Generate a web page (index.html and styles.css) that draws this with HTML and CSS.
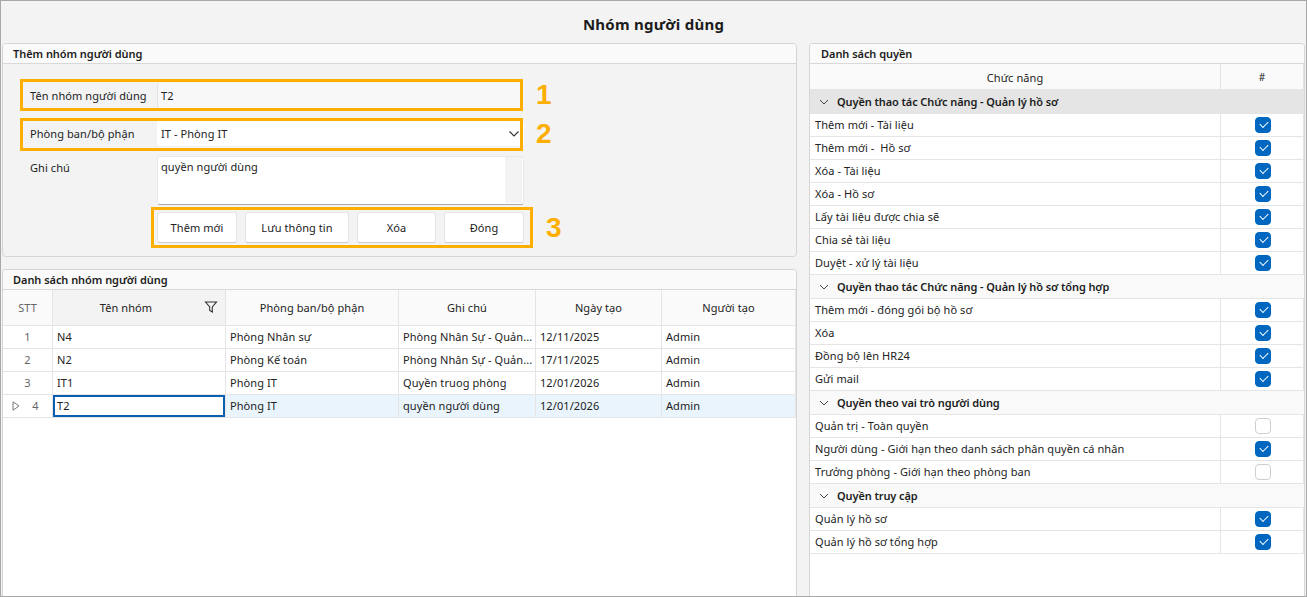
FILE: index.html
```html
<!DOCTYPE html>
<html lang="vi">
<head>
<meta charset="utf-8">
<title>Nhóm người dùng</title>
<link rel="stylesheet" href="styles.css">
</head>
<body>
<div class="app">
  <h1 class="title">Nhóm người dùng</h1>
  <div class="columns">
    <div class="left">
      <section class="panel form-panel">
        <h2 class="panel-head">Thêm nhóm người dùng</h2>
        <div class="form">
          <div class="row">
            <label class="lbl">Tên nhóm người dùng</label>
            <div class="field field-plain">T2</div>
          </div>
          <div class="row row2">
            <label class="lbl">Phòng ban/bộ phận</label>
            <div class="field field-select">IT - Phòng IT
              <svg class="chev" width="12" height="8" viewBox="0 0 12 8"><path d="M1.500 1.500 6 6l4.500-4.500" fill="none" stroke="#333" stroke-width="1.100"/></svg>
            </div>
          </div>
          <div class="row row3">
            <label class="lbl lbl-note">Ghi chú</label>
            <div class="field field-area"><span>quyền người dùng</span><i class="scroll"></i></div>
          </div>
          <div class="buttons">
            <button class="btn b1">Thêm mới</button>
            <button class="btn b2">Lưu thông tin</button>
            <button class="btn b3">Xóa</button>
            <button class="btn b1">Đóng</button>
          </div>
          <i class="mark m1"></i><b class="num n1">1</b>
          <i class="mark m2"></i><b class="num n2">2</b>
          <i class="mark m3"></i><b class="num n3">3</b>
        </div>
      </section>
      <section class="panel list-panel">
        <h2 class="panel-head">Danh sách nhóm người dùng</h2>
        <table class="grid groups">
          <colgroup><col class="c1"><col class="c2"><col class="c3"><col class="c4"><col class="c5"><col class="c6"></colgroup>
          <thead>
            <tr><th class="stt-h">STT</th><th class="filter-h">Tên nhóm<svg class="filter" width="14" height="14" viewBox="0 0 14 14"><path d="M1.500 2h11L8.300 7v5l-2.600-1.500V7z" fill="none" stroke="#333" stroke-width="1.100"/></svg></th><th>Phòng ban/bộ phận</th><th>Ghi chú</th><th>Ngày tạo</th><th>Người tạo</th></tr>
          </thead>
          <tbody>
            <tr><td class="stt">1</td><td>N4</td><td>Phòng Nhân sự</td><td>Phòng Nhân Sự - Quản...</td><td>12/11/2025</td><td>Admin</td></tr>
            <tr><td class="stt">2</td><td>N2</td><td>Phòng Kế toán</td><td>Phòng Nhân Sự - Quản...</td><td>17/11/2025</td><td>Admin</td></tr>
            <tr><td class="stt">3</td><td>IT1</td><td>Phòng IT</td><td>Quyền truog phòng</td><td>12/01/2026</td><td>Admin</td></tr>
            <tr class="sel"><td class="stt"><svg class="arrow" width="8" height="10" viewBox="0 0 8 10"><path d="M1 .8 7 5 1 9.200z" fill="none" stroke="#777"/></svg>4</td><td class="focus">T2</td><td>Phòng IT</td><td>quyền người dùng</td><td>12/01/2026</td><td>Admin</td></tr>
          </tbody>
        </table>
      </section>
    </div>
    <section class="panel right">
      <h2 class="panel-head">Danh sách quyền</h2>
      <table class="grid perms">
        <colgroup><col class="p1"><col class="p2"></colgroup>
        <thead><tr><th>Chức năng</th><th class="hash">#</th></tr></thead>
        <tbody>
          <tr class="grp first"><td colspan="2"><svg class="gchev" width="10" height="6" viewBox="0 0 10 6"><path d="M1 1l4 4 4-4" fill="none" stroke="#444"/></svg>Quyền thao tác Chức năng - Quản lý hồ sơ</td></tr>
          <tr><td>Thêm mới - Tài liệu</td><td class="ck"><i class="box on"></i></td></tr>
          <tr><td>Thêm mới -&nbsp; Hồ sơ</td><td class="ck"><i class="box on"></i></td></tr>
          <tr><td>Xóa - Tài liệu</td><td class="ck"><i class="box on"></i></td></tr>
          <tr><td>Xóa - Hồ sơ</td><td class="ck"><i class="box on"></i></td></tr>
          <tr><td>Lấy tài liệu được chia sẽ</td><td class="ck"><i class="box on"></i></td></tr>
          <tr><td>Chia sẻ tài liệu</td><td class="ck"><i class="box on"></i></td></tr>
          <tr><td>Duyệt - xử lý tài liệu</td><td class="ck"><i class="box on"></i></td></tr>
          <tr class="grp"><td colspan="2"><svg class="gchev" width="10" height="6" viewBox="0 0 10 6"><path d="M1 1l4 4 4-4" fill="none" stroke="#444"/></svg>Quyền thao tác Chức năng - Quản lý hồ sơ tổng hợp</td></tr>
          <tr><td>Thêm mới - đóng gói bộ hồ sơ</td><td class="ck"><i class="box on"></i></td></tr>
          <tr><td>Xóa</td><td class="ck"><i class="box on"></i></td></tr>
          <tr><td>Đồng bộ lên HR24</td><td class="ck"><i class="box on"></i></td></tr>
          <tr><td>Gửi mail</td><td class="ck"><i class="box on"></i></td></tr>
          <tr class="grp"><td colspan="2"><svg class="gchev" width="10" height="6" viewBox="0 0 10 6"><path d="M1 1l4 4 4-4" fill="none" stroke="#444"/></svg>Quyền theo vai trò người dùng</td></tr>
          <tr><td>Quản trị - Toàn quyền</td><td class="ck"><i class="box"></i></td></tr>
          <tr><td>Người dùng - Giới hạn theo danh sách phân quyền cá nhân</td><td class="ck"><i class="box on"></i></td></tr>
          <tr><td>Trưởng phòng - Giới hạn theo phòng ban</td><td class="ck"><i class="box"></i></td></tr>
          <tr class="grp"><td colspan="2"><svg class="gchev" width="10" height="6" viewBox="0 0 10 6"><path d="M1 1l4 4 4-4" fill="none" stroke="#444"/></svg>Quyền truy cập</td></tr>
          <tr><td>Quản lý hồ sơ</td><td class="ck"><i class="box on"></i></td></tr>
          <tr><td>Quản lý hồ sơ tổng hợp</td><td class="ck"><i class="box on"></i></td></tr>
        </tbody>
      </table>
    </section>
  </div>
</div>
</body>
</html>
```
FILE: styles.css
```css
* { box-sizing: border-box; }
html, body { margin: 0; padding: 0; height: 100%; overflow: hidden; }
body { font-family: "Noto Sans", "Open Sans", sans-serif; font-size: 11px; letter-spacing: .08px; color: #222; background: #f3f3f3; }
.app { width: 1307px; height: 597px; border: 1px solid #a8a8a8; display: flex; flex-direction: column; overflow: hidden; }
.title { margin: 0; height: 42px; padding-top: 12px; text-align: center; font-size: 15px; letter-spacing: .25px; line-height: 22px; font-weight: 700; color: #1c1c1c; }
.columns { flex: 1; display: flex; gap: 12px; padding-left: 1px; min-height: 0; }
.left { width: 795px; display: flex; flex-direction: column; gap: 12px; }
.panel { background: #f3f3f3; border: 1px solid #d5d5d5; border-radius: 4px 4px 0 0; overflow: hidden; }
.panel-head { margin: 0; height: 20px; background: #fafafa; border-bottom: 1px solid #d8d8d8; padding-left: 10px; font-size: 11px; letter-spacing: -.05px; line-height: 19px; font-weight: 600; color: #1c1c1c; }
.right .panel-head { padding-left: 11px; }
.form-panel { height: 214px; border-radius: 4px; }
.form { position: relative; height: 192px; padding: 19px 0 0 27px; }
.row { display: flex; height: 25px; }
.row2 { margin-top: 13px; }
.row3 { margin-top: 10px; height: 49px; }
.lbl { width: 127px; line-height: 25px; color: #222; }
.lbl-note { line-height: 23px; }
.field { width: 367px; padding-left: 4px; line-height: 25px; position: relative; border-radius: 3px; }
.field-plain { background: #f8f8f8; border-left: 1px solid #e2e2e2; padding-left: 3px; }
.field-select { background: #fff; }
.chev { position: absolute; right: 4px; top: 9px; }
.field-area { background: #fff; border: 1px solid #e8e8e8; border-bottom-color: #aaa; line-height: 20px; padding-left: 3px; }
.scroll { position: absolute; top: 0; right: 1px; bottom: 1px; width: 17px; background: #f3f3f3; }
.buttons { display: flex; gap: 8px; margin: 7px 0 0 127px; }
.btn { height: 31px; padding: 0; background: #fff; border: 1px solid #e4e4e4; border-bottom-color: #ccc; border-radius: 3px; font: inherit; letter-spacing: inherit; color: #222; }
.b1 { width: 80px; }
.b2 { width: 104px; }
.b3 { width: 79px; }
.mark { position: absolute; border: 3px solid #fcaf00; pointer-events: none; }
.m1 { left: 17px; top: 15px; width: 503px; height: 32px; }
.m2 { left: 17px; top: 54px; width: 503px; height: 33px; }
.m3 { left: 148px; top: 143px; width: 382px; height: 41px; }
.num { position: absolute; font-family: "Liberation Sans", sans-serif; font-size: 28px; letter-spacing: 0; line-height: 32px; font-weight: 700; color: #fcaf00; }
.n1 { left: 533px; top: 15px; }
.n2 { left: 533px; top: 54px; }
.n3 { left: 543px; top: 148px; }
.list-panel { flex: 1; background: #fff; border-bottom: 0; }
.right { width: 496px; background: #fff; border-bottom: 0; }
.grid { border-collapse: separate; border-spacing: 0; table-layout: fixed; background: #fff; }
.grid th, .grid td { padding: 0 4px; border-right: 1px solid #e5e5e5; border-bottom: 1px solid #e5e5e5; font-weight: 400; white-space: nowrap; overflow: hidden; }
.grid td { padding-bottom: 1px; }
.grid th { background: #fafafa; text-align: center; color: #222; position: relative; }
.groups { width: 793px; }
.c1 { width: 50px; } .c2 { width: 173px; } .c3 { width: 173px; } .c4 { width: 137px; } .c5 { width: 126px; } .c6 { width: 134px; }
.groups thead tr { height: 36px; }
.groups tbody tr { height: 23px; }
.groups .stt-h { color: #666; }
.groups .filter-h { background: #f3f3f3; padding-right: 30px; }
.filter { position: absolute; right: 7px; top: 10px; }
.stt { text-align: center; color: #666; background: #fff; position: relative; }
.sel td { background: #e9f4fc; }
.sel .stt { background: #fff; padding-left: 20px; }
.arrow { position: absolute; left: 9px; top: 6px; }
.sel .focus { background: #fff; box-shadow: inset 0 0 0 2px #0a5fb0; }
.perms { width: 494px; }
.p1 { width: 411px; } .p2 { width: 83px; }
.perms thead tr { height: 26px; }
.perms thead th { padding-top: 1px; }
.perms tbody tr { height: 23px; }
.perms .hash { font-size: 10px; }
.perms td:first-child { padding-left: 5px; }
.perms .grp { height: 24px; }
.grp td { background: #f9f9f9; font-weight: 600 !important; letter-spacing: -.1px; padding-left: 9px !important; color: #1c1c1c; border-right: 0 !important; }
.grp.first td { background: #e5e5e5; }
.gchev { margin-right: 8px; vertical-align: 1px; }
.ck { text-align: center; padding: 0 !important; line-height: 0; }
.box { display: inline-block; width: 16px; height: 16px; border: 1px solid #cfcfcf; border-radius: 4px; background: #fff; position: relative; margin-left: 1px; }
.box.on { background: #0067c0; border-color: #0067c0; }
.box.on::after { content: ""; position: absolute; left: 4px; top: 3px; width: 7px; height: 4px; border-left: 1px solid #fff; border-bottom: 1px solid #fff; transform: rotate(-45deg); }
```
